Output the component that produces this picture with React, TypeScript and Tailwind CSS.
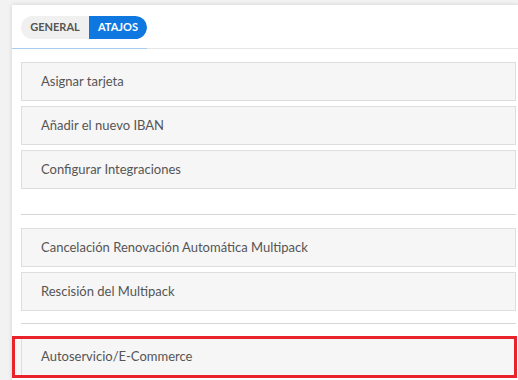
export default function App() {
  const group1 = ["Asignar tarjeta", "Añadir el nuevo IBAN", "Configurar Integraciones"];
  const group2 = ["Cancelación Renovación Automática Multipack", "Rescisión del Multipack"];

  return (
    <div
      className="w-[518px] h-[380px] overflow-hidden bg-[#f2f2f2] pt-[5px] pl-[12px]"
      style={{ fontFamily: "Lato, 'Open Sans', sans-serif" }}
    >
      <div className="bg-white h-full shadow-[0_0_4px_rgba(0,0,0,0.15)]">
        <div className="flex border-b border-[#e6e6e6] pt-[11px] pb-[9px] pl-[9px] relative">
          <div className="flex h-[23px] rounded-full overflow-hidden text-[11px] font-bold uppercase">
            <div className="bg-[#f0f0f0] text-[#555] w-[68px] flex items-center justify-center">General</div>
            <div className="bg-[#0f78e0] text-white w-[58px] flex items-center justify-center rounded-r-full">Atajos</div>
          </div>
          <div className="absolute left-0 bottom-[-1px] w-[135px] h-px bg-[#a9cdee]" />
        </div>

        <div className="pl-[9px] pr-[2px] pt-[13px] flex flex-col">
          <div className="flex flex-col gap-[5px]">
            {group1.map((t) => (
              <div key={t} className="h-[39px] bg-[#f6f6f6] border border-[#dedede] flex items-center pl-[19px] text-[13px] text-[#555]">
                {t}
              </div>
            ))}
          </div>
          <div className="h-px bg-[#d6d6d6] mt-[25px] mb-[13px]" />
          <div className="flex flex-col gap-[5px]">
            {group2.map((t) => (
              <div key={t} className="h-[39px] bg-[#f6f6f6] border border-[#dedede] flex items-center pl-[19px] text-[13px] text-[#555]">
                {t}
              </div>
            ))}
          </div>
          <div className="h-px bg-[#d6d6d6] mt-[12px] mb-[12px]" />
          <div className="-ml-[9px] mr-[-1px] h-[42px] border-[3px] border-[#e8232b] bg-[#f6f6f6] flex">
            <div className="ml-[6px] border-l border-[#dedede] flex items-center pl-[19px] text-[13px] text-[#555]">
              Autoservicio/E-Commerce
            </div>
          </div>
        </div>
      </div>
    </div>
  );
}
